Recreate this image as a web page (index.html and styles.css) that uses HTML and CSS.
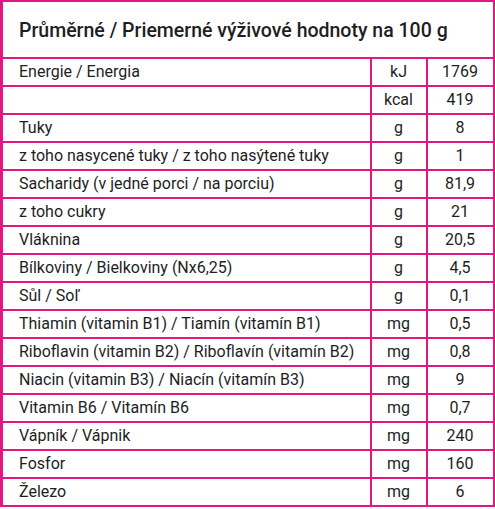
FILE: index.html
```html
<!DOCTYPE html>
<html lang="cs">
<head>
<meta charset="utf-8">
<title>Výživové hodnoty</title>
<link rel="stylesheet" href="styles.css">
</head>
<body>
<table class="nutri">
  <colgroup>
    <col class="c-name">
    <col class="c-unit">
    <col class="c-val">
  </colgroup>
  <thead>
    <tr><th colspan="3" class="title">Průměrné / Priemerné výživové hodnoty na 100 g</th></tr>
  </thead>
  <tbody>
    <tr><td class="name">Energie / Energia</td><td class="unit">kJ</td><td class="val">1769</td></tr>
    <tr><td class="name"></td><td class="unit">kcal</td><td class="val">419</td></tr>
    <tr><td class="name">Tuky</td><td class="unit">g</td><td class="val">8</td></tr>
    <tr><td class="name">z toho nasycené tuky / z toho nasýtené tuky</td><td class="unit">g</td><td class="val">1</td></tr>
    <tr><td class="name">Sacharidy (v jedné porci / na porciu)</td><td class="unit">g</td><td class="val">81,9</td></tr>
    <tr><td class="name">z toho cukry</td><td class="unit">g</td><td class="val">21</td></tr>
    <tr><td class="name">Vláknina</td><td class="unit">g</td><td class="val">20,5</td></tr>
    <tr><td class="name">Bílkoviny / Bielkoviny (Nx6,25)</td><td class="unit">g</td><td class="val">4,5</td></tr>
    <tr><td class="name">Sůl / Soľ</td><td class="unit">g</td><td class="val">0,1</td></tr>
    <tr><td class="name">Thiamin (vitamin B1) / Tiamín (vitamín B1)</td><td class="unit">mg</td><td class="val">0,5</td></tr>
    <tr><td class="name">Riboflavin (vitamin B2) / Riboflavín (vitamín B2)</td><td class="unit">mg</td><td class="val">0,8</td></tr>
    <tr><td class="name">Niacin (vitamin B3) / Niacín (vitamín B3)</td><td class="unit">mg</td><td class="val">9</td></tr>
    <tr><td class="name">Vitamin B6 / Vitamín B6</td><td class="unit">mg</td><td class="val">0,7</td></tr>
    <tr><td class="name">Vápník / Vápnik</td><td class="unit">mg</td><td class="val">240</td></tr>
    <tr><td class="name">Fosfor</td><td class="unit">mg</td><td class="val">160</td></tr>
    <tr><td class="name">Železo</td><td class="unit">mg</td><td class="val">6</td></tr>
  </tbody>
</table>
</body>
</html>
```
FILE: styles.css
```css
html, body {
  margin: 0;
  padding: 0;
  background: #ffffff;
}

.nutri {
  border-collapse: collapse;
  table-layout: fixed;
  width: 492px;
  font-family: Roboto, "Liberation Sans", sans-serif;
  color: #1e1e1e;
  font-size: 16px;
}

.c-name { width: 369px; }
.c-unit { width: 56px; }
.c-val { width: 67px; }

.nutri th,
.nutri td {
  border: 2px solid #e2177f;
  padding: 0;
}

.nutri tr > :first-child {
  border-left-width: 3px;
}

.title {
  height: 53px;
  text-align: left;
  font-size: 19.5px;
  font-weight: 500;
  padding-left: 16px !important;
  padding-top: 2px !important;
}

.nutri td {
  height: 26px;
  line-height: 26px;
}

.name {
  padding-left: 16px !important;
  white-space: nowrap;
}

.unit,
.val {
  text-align: center;
}
```
